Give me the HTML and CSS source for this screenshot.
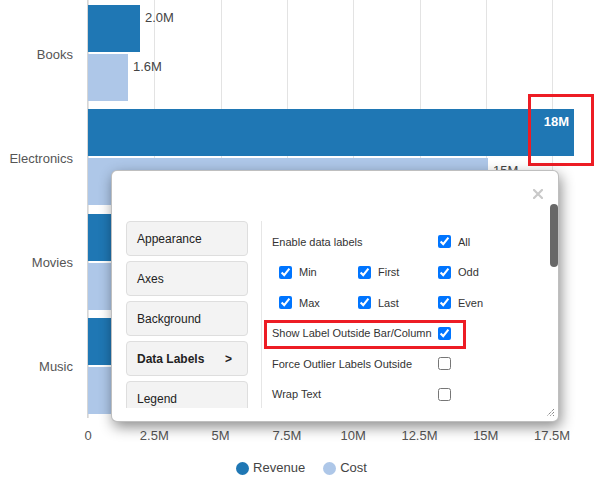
FILE: index.html
```html
<!DOCTYPE html>
<html>
<head>
<meta charset="utf-8">
<link rel="stylesheet" href="styles.css">
</head>
<body>
<div class="page">
  <div class="chart">
    <div class="ylabels">
      <div class="ylabel">Books</div>
      <div class="ylabel">Electronics</div>
      <div class="ylabel">Movies</div>
      <div class="ylabel">Music</div>
    </div>
    <div class="plot">
      <div class="cat">
        <div class="row"><div class="bar rev" style="width:52px"></div><span class="dl">2.0M</span></div>
        <div class="row"><div class="bar cost" style="width:40px"></div><span class="dl">1.6M</span></div>
      </div>
      <div class="cat">
        <div class="row"><div class="bar rev" style="width:486px"><span class="dl in">18M</span></div></div>
        <div class="row"><div class="bar cost" style="width:400px"></div><span class="dl">15M</span></div>
      </div>
      <div class="cat">
        <div class="row"><div class="bar rev" style="width:330px"></div></div>
        <div class="row"><div class="bar cost" style="width:260px"></div></div>
      </div>
      <div class="cat">
        <div class="row"><div class="bar rev" style="width:200px"></div></div>
        <div class="row"><div class="bar cost" style="width:150px"></div></div>
      </div>
    </div>
  </div>
  <div class="xaxis">
    <span>0</span><span>2.5M</span><span>5M</span><span>7.5M</span><span>10M</span><span>12.5M</span><span>15M</span><span>17.5M</span>
  </div>
  <div class="legend">
    <div class="litem"><span class="dot rev"></span>Revenue</div>
    <div class="litem"><span class="dot cost"></span>Cost</div>
  </div>

  <div class="hl hl-bar"></div>

  <div class="modal">
    <div class="modal-head">
      <svg class="close" width="10" height="10" viewBox="0 0 10 10"><path d="M1 1L9 9M9 1L1 9" stroke="#c9c9c9" stroke-width="2.2" stroke-linecap="square"/></svg>
    </div>
    <div class="modal-body">
      <div class="nav">
        <div class="navitem">Appearance</div>
        <div class="navitem">Axes</div>
        <div class="navitem">Background</div>
        <div class="navitem active"><span>Data Labels</span><span>&gt;</span></div>
        <div class="navitem">Legend</div>
      </div>
      <div class="content">
        <div class="opt">
          <span class="optlabel">Enable data labels</span>
          <label class="chk"><input type="checkbox" checked><span>All</span></label>
        </div>
        <div class="opt sub">
          <label class="chk c1"><input type="checkbox" checked><span>Min</span></label>
          <label class="chk c2"><input type="checkbox" checked><span>First</span></label>
          <label class="chk"><input type="checkbox" checked><span>Odd</span></label>
        </div>
        <div class="opt sub">
          <label class="chk c1"><input type="checkbox" checked><span>Max</span></label>
          <label class="chk c2"><input type="checkbox" checked><span>Last</span></label>
          <label class="chk"><input type="checkbox" checked><span>Even</span></label>
        </div>
        <div class="opt">
          <span class="optlabel">Show Label Outside Bar/Column</span>
          <label class="chk"><input type="checkbox" checked></label>
        </div>
        <div class="opt">
          <span class="optlabel">Force Outlier Labels Outside</span>
          <label class="chk"><input type="checkbox"></label>
        </div>
        <div class="opt">
          <span class="optlabel">Wrap Text</span>
          <label class="chk"><input type="checkbox"></label>
        </div>
      </div>
    </div>
    <div class="thumb"></div>
    <svg class="grip" width="9" height="9" viewBox="0 0 9 9">
      <path d="M8 1L1 8M8 4L4 8M8 7L7 8" stroke="#555" stroke-width="1" stroke-dasharray="1 1"/>
    </svg>
  </div>

  <div class="hl hl-opt"></div>
</div>
</body>
</html>
```

FILE: styles.css
```css
* { box-sizing: border-box; }
html, body { margin: 0; padding: 0; background: #fff; }
body {
  font-family: "Liberation Sans", Arial, sans-serif;
  width: 609px;
  height: 480px;
  overflow: hidden;
}
.page { position: relative; width: 609px; height: 480px; }

.chart {
  display: grid;
  grid-template-columns: 88px 1fr;
  height: 418px;
}
.ylabels {
  display: grid;
  grid-template-rows: repeat(4, 1fr);
  padding-top: 3px;
}
.ylabel {
  display: flex;
  align-items: center;
  justify-content: flex-end;
  padding-right: 15px;
  font-size: 13px;
  color: #555;
}
.plot {
  display: grid;
  grid-template-rows: repeat(4, 1fr);
  padding-top: 1px;
  background: repeating-linear-gradient(to right, #e3e3e3 0 1px, transparent 1px 66.3px);
  border-left: 1px solid #d6d6d6;
  margin-left: -1px;
}
.cat {
  display: flex;
  flex-direction: column;
  justify-content: center;
  gap: 2px;
}
.row { display: flex; align-items: flex-start; height: 47px; }
.bar { height: 47px; flex: none; display: flex; justify-content: flex-end; align-items: flex-start; }
.bar.rev { background: #1f77b4; }
.bar.cost { background: #aec7e8; }
.dl {
  font-size: 13px;
  line-height: 15px;
  color: #444;
  margin-top: 5px;
  margin-left: 5px;
}
.dl.in {
  color: #fff;
  font-weight: bold;
  margin: 5px 5px 0 0;
}

.xaxis {
  display: flex;
  padding-left: 54.85px;
  margin-top: 10px;
}
.xaxis span {
  width: 66.3px;
  flex: none;
  text-align: center;
  font-size: 13px;
  line-height: 16px;
  color: #555;
}
.legend {
  display: flex;
  justify-content: center;
  gap: 18px;
  margin-top: 16px;
  padding-right: 6px;
}
.litem {
  display: flex;
  align-items: center;
  gap: 4px;
  font-size: 13px;
  line-height: 16px;
  color: #444;
}
.dot { width: 13px; height: 13px; border-radius: 50%; display: inline-block; }
.dot.rev { background: #1f77b4; }
.dot.cost { background: #aec7e8; }

.hl { position: absolute; border: 3px solid #ed1c24; }
.hl-bar { left: 528px; top: 94px; width: 66px; height: 72px; }
.hl-opt { left: 264px; top: 320px; width: 202px; height: 29px; }

.modal {
  position: absolute;
  left: 111px;
  top: 170px;
  width: 448px;
  height: 252px;
  background: #fff;
  border: 1px solid rgba(0,0,0,0.25);
  border-radius: 6px;
  box-shadow: 2px 5px 14px rgba(0,0,0,0.45);
  overflow: hidden;
}
.modal-head {
  height: 50px;
  display: flex;
  justify-content: flex-end;
  align-items: flex-start;
  padding: 18px 15px 0 0;
}
.close { display: block; }
.modal-body {
  display: flex;
  height: 187px;
  overflow: hidden;
  padding-left: 14px;
}
.nav {
  width: 122px;
  flex: none;
  margin-right: 13px;
  display: flex;
  flex-direction: column;
  gap: 5px;
}
.navitem {
  height: 35px;
  flex: none;
  display: flex;
  align-items: center;
  justify-content: space-between;
  padding: 0 15px 0 10px;
  background: #f3f3f3;
  border: 1px solid #dedede;
  border-radius: 4px;
  font-size: 12px;
  color: #222;
}
.navitem.active { font-weight: bold; }
.content {
  flex: 1;
  border-left: 1px solid #e6e6e6;
  padding: 5.5px 0 0 10px;
}
.opt {
  height: 30.5px;
  display: flex;
  align-items: center;
  font-size: 11px;
  color: #333;
}
.optlabel { width: 166px; flex: none; }
.opt.sub { padding-left: 7px; }
.chk { display: flex; align-items: center; gap: 7px; }
.chk.c1 { width: 79px; }
.chk.c2 { width: 80px; }
.chk input { margin: 0; width: 13px; height: 13px; }

.thumb {
  position: absolute;
  right: 0;
  top: 33px;
  width: 8px;
  height: 63px;
  border-radius: 4px;
  background: #686868;
}
.grip { position: absolute; right: 3px; bottom: 4px; display: block; }
```
